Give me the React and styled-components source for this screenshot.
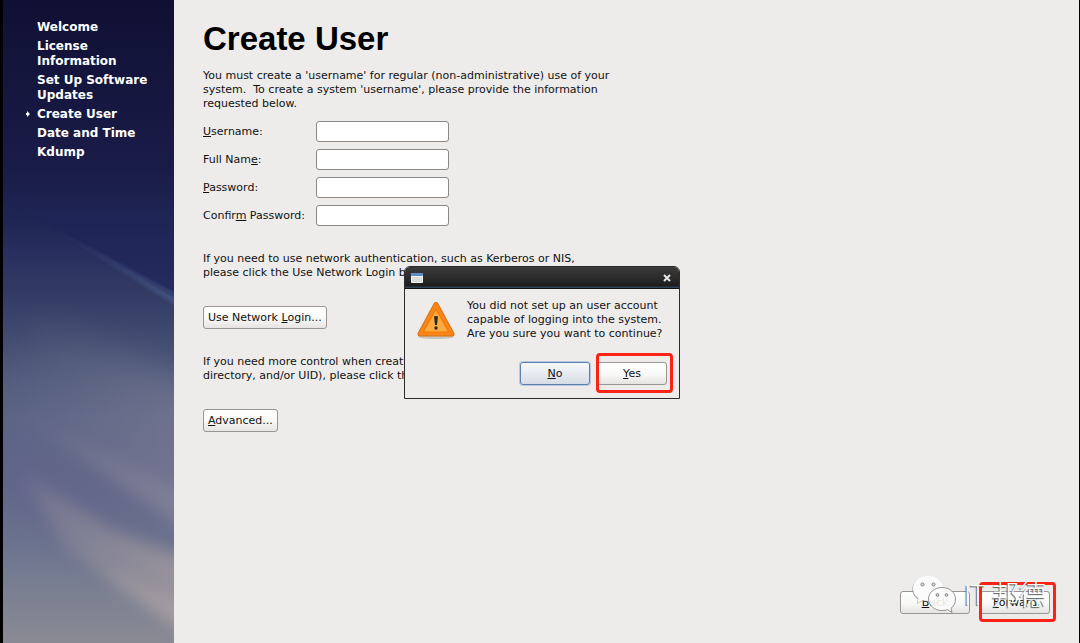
import React from 'react';
import styled, { createGlobalStyle } from 'styled-components';

const GlobalStyle = createGlobalStyle`
  * {
    box-sizing: border-box;
  }

  body {
    margin: 0;
    background-color: #edeceb;
    color: #111111;
    font-family: 'DejaVu Sans', sans-serif;
    font-size: 11px;
    line-height: 14px;
  }
`;

const Screen = styled.div`
  position: relative;
  display: flex;
  min-height: 100vh;
  border-left: 3px solid #000000;
  border-right: 1px solid #000000;
`;

const Sidebar = styled.nav`
  position: relative;
  flex: none;
  width: 171px;
  padding: 20px 20px 20px 34px;
  background-color: #101134;
`;

/* The sky picture lies behind the list of steps */
const SkyArt = styled.svg`
  position: absolute;
  inset: 0;
  width: 100%;
  height: 100%;
`;

const Steps = styled.ol`
  position: relative;
  display: flex;
  flex-direction: column;
  gap: 4px;
  margin: 0;
  padding: 0;
  list-style: none;
`;

const Step = styled.li`
  position: relative;
  color: #ffffff;
  font-size: 12px;
  font-weight: bold;
  line-height: 15px;
  white-space: pre-line;
`;

const StepMark = styled.svg`
  position: absolute;
  top: 4px;
  left: -11px;
  width: 4px;
  height: 6px;
  fill: #ffffff;
`;

const Main = styled.main`
  display: flex;
  flex: 1;
  flex-direction: column;
  align-items: flex-start;
  padding: 21px 29px 29px 29px;
`;

const Title = styled.h1`
  margin: 0 0 12px;
  color: #000000;
  font-family: 'Liberation Sans', Arial, sans-serif;
  font-size: 33px;
  font-weight: bold;
  line-height: 36px;
`;

const Text = styled.p`
  margin: 0;
  white-space: pre-wrap;
`;

const Form = styled.form`
  display: flex;
  flex-direction: column;
  align-items: flex-start;
  gap: 26px;
  margin-top: 10px;
`;

const Fields = styled.div`
  display: grid;
  grid-template-columns: 113px 133px;
  gap: 7px 0;
  align-items: center;
`;

const Input = styled.input`
  width: 100%;
  height: 21px;
  padding: 0 4px;
  border: 1px solid #8c8886;
  border-radius: 3px;
  background-color: #ffffff;
  font: inherit;
`;

const Button = styled.button`
  min-width: ${(props) => (props.$wide ? '70px' : '0')};
  height: 23px;
  padding: 0 4px;
  border: 1px solid ${(props) => (props.$active ? '#5b7fae' : '#989592')};
  border-radius: 3px;
  background: ${(props) =>
    props.$active
      ? 'linear-gradient(#f6f8fb, #e6eaf0 55%, #d6dce5)'
      : 'linear-gradient(#ffffff, #f8f8f7 55%, #e6e4e2)'};
  box-shadow: ${(props) => (props.$active ? '0 0 0 1px #b9c8dc' : 'none')};
  color: #111111;
  font: inherit;
`;

const Footer = styled.footer`
  display: flex;
  align-self: flex-end;
  gap: 10px;
  margin-top: auto;
`;

/* Red frame drawn over a button */
const Marked = styled.div`
  position: relative;
  display: flex;

  &::after {
    content: '';
    position: absolute;
    inset: -9px -6px -8px -1px;
    border: 3px solid #fb2216;
    border-radius: 4px;
    pointer-events: none;
  }
`;

const Dialog = styled.section`
  position: absolute;
  top: 266px;
  left: 401px;
  width: 276px;
  border: 1px solid #2b2b2b;
  border-radius: 6px 6px 0 0;
  background-color: #edeceb;
`;

const TitleBar = styled.header`
  display: flex;
  align-items: center;
  justify-content: space-between;
  height: 22px;
  padding: 1px 6px 0;
  border-bottom: 1px solid #111111;
  border-radius: 5px 5px 0 0;
  background: linear-gradient(#3a3a3a, #2c2c2c 50%, #1c1c1c 90%, #38506f);
`;

const CloseButton = styled.button`
  display: flex;
  padding: 2px;
  border: 0;
  background: none;
`;

const Message = styled.div`
  display: flex;
  align-items: flex-end;
  gap: 12px;
  padding: 10px 11px 0 12px;
`;

const Actions = styled.div`
  display: flex;
  justify-content: flex-end;
  gap: 7px;
  padding: 21px 12px 13px;
`;

const Watermark = styled.div`
  position: absolute;
  right: 33px;
  bottom: 27px;
  display: flex;
  align-items: center;
  gap: 8px;
  color: #ffffff;
  font-family: 'Open Sans', 'Noto Sans CJK SC', sans-serif;
  font-size: 27px;
  font-weight: 300;
  line-height: 42px;
  text-shadow: -1px 1px 1px #555555;
  pointer-events: none;
`;

function Sky() {
  return (
    <SkyArt viewBox="0 0 171 643" preserveAspectRatio="none" aria-hidden="true">
      <defs>
        <linearGradient id="sky" x1="0" y1="0" x2="0" y2="643" gradientUnits="userSpaceOnUse">
          <stop offset="0" stopColor="#101034" />
          <stop offset="0.26" stopColor="#1a1c48" />
          <stop offset="0.34" stopColor="#1f2552" />
          <stop offset="0.39" stopColor="#282e5d" />
          <stop offset="0.47" stopColor="#353e66" />
          <stop offset="0.53" stopColor="#424c71" />
          <stop offset="0.59" stopColor="#505a7b" />
          <stop offset="0.65" stopColor="#5b6384" />
          <stop offset="0.75" stopColor="#646889" />
          <stop offset="0.84" stopColor="#6b728e" />
          <stop offset="0.93" stopColor="#7c8192" />
          <stop offset="1" stopColor="#8a8a93" />
        </linearGradient>
        <linearGradient id="night" x1="0" y1="190" x2="0" y2="300" gradientUnits="userSpaceOnUse">
          <stop offset="0" stopColor="#1e2455" stopOpacity="0" />
          <stop offset="0.35" stopColor="#1f2556" />
          <stop offset="1" stopColor="#262c5e" />
        </linearGradient>
        <linearGradient id="beam" x1="0" y1="0" x2="1" y2="0">
          <stop offset="0" stopColor="#4a5f8c" stopOpacity="0" />
          <stop offset="1" stopColor="#4a5f8c" stopOpacity="0.45" />
        </linearGradient>
        <linearGradient id="glow" x1="0" y1="0" x2="171" y2="0" gradientUnits="userSpaceOnUse">
          <stop offset="0" stopColor="#8d8b9f" stopOpacity="0.1" />
          <stop offset="1" stopColor="#918ea0" stopOpacity="0.85" />
        </linearGradient>
        <linearGradient id="cloud" x1="20" y1="0" x2="171" y2="0" gradientUnits="userSpaceOnUse">
          <stop offset="0" stopColor="#9c959e" stopOpacity="0.3" />
          <stop offset="1" stopColor="#a39b9f" stopOpacity="0.9" />
        </linearGradient>
        <filter id="soft" x="-100%" y="-100%" width="300%" height="300%" colorInterpolationFilters="sRGB">
          <feGaussianBlur stdDeviation="16" />
        </filter>
        <filter id="haze" x="-100%" y="-100%" width="300%" height="300%" colorInterpolationFilters="sRGB">
          <feGaussianBlur stdDeviation="8" />
        </filter>
        <filter id="thin" x="-20%" y="-20%" width="140%" height="140%" colorInterpolationFilters="sRGB">
          <feGaussianBlur stdDeviation="1" />
        </filter>
      </defs>
      <rect width="171" height="643" fill="url(#sky)" />
      <path d="M-10 194 L181 304 V190 H-10 Z" fill="url(#night)" filter="url(#thin)" />
      <path d="M30 216 L180 297 V311 Z" fill="url(#beam)" filter="url(#thin)" />
      <path d="M60 230 L180 304 V308 Z" fill="url(#beam)" filter="url(#thin)" />
      <path d="M40 320 L230 400 V530 L-40 395 Z" fill="url(#glow)" opacity="0.4" filter="url(#soft)" />
      <path d="M20 415 L230 515 V565 Z" fill="url(#glow)" opacity="0.6" filter="url(#haze)" />
      <path d="M-40 430 L130 530 L230 600 L120 560 L-40 490 Z" fill="#5d6089" opacity="0.3" filter="url(#soft)" />
      <path d="M20 475 L110 530 L230 575 V665 L110 585 L60 545 Z" fill="url(#cloud)" opacity="0.85" filter="url(#haze)" />
      <path d="M100 570 L220 625 V655 Z" fill="#b3aaac" opacity="0.5" filter="url(#haze)" />
    </SkyArt>
  );
}

function WarningIcon() {
  return (
    <svg width="38" height="40" viewBox="0 0 38 40" aria-hidden="true">
      <ellipse cx="19" cy="36" rx="18" ry="2" fill="#c9c6c2" />
      <path
        d="M19 3.5 L35 33 H3 Z"
        fill="#f57900"
        stroke="#d9700f"
        strokeWidth="5"
        strokeLinejoin="round"
      />
      <path
        d="M19 3.5 L35 33 H3 Z"
        fill="#f57900"
        stroke="#f8861a"
        strokeWidth="3"
        strokeLinejoin="round"
      />
      <path d="M19 10 L30 30 H8 Z" fill="#fbab40" stroke="#fbab40" strokeLinejoin="round" />
      <path d="M17 15.5 Q19 14.5 21 15.5 L20 24 H18 Z" fill="#2e2a1c" />
      <circle cx="19" cy="27" r="1.7" fill="#2e2a1c" />
    </svg>
  );
}

function WindowIcon() {
  return (
    <svg width="12" height="10" viewBox="0 0 12 10" aria-hidden="true">
      <rect width="12" height="10" rx="1" fill="#f1f1ee" />
      <rect width="12" height="3" rx="1" fill="#5b8cc9" />
      <rect x="1" y="4" width="10" height="5" fill="#dcdcd8" />
    </svg>
  );
}

function ChatLogo() {
  return (
    <svg width="44" height="40" viewBox="0 0 44 40" aria-hidden="true">
      <path
        d="M16 1 C7.5 1 1 6.5 1 13.5 C1 17.5 3 21 6.5 23.3 L5.5 28 L10.5 25.3 C12.3 25.8 14 26 16 26 C24.5 26 31 20.5 31 13.5 C31 6.5 24.5 1 16 1 Z"
        fill="#777777"
        opacity="0.6"
        transform="translate(-0.7 1)"
      />
      <path
        d="M16 1 C7.5 1 1 6.5 1 13.5 C1 17.5 3 21 6.5 23.3 L5.5 28 L10.5 25.3 C12.3 25.8 14 26 16 26 C24.5 26 31 20.5 31 13.5 C31 6.5 24.5 1 16 1 Z"
        fill="#fbfbfb"
      />
      <path
        d="M30 12.5 C22.5 12.5 16.5 17.5 16.5 24 C16.5 30.5 22.5 35.5 30 35.5 C32 35.5 34 35.2 35.5 34.7 L40 37.5 L39 33.3 C42 31 43.5 27.8 43.5 24 C43.5 17.5 37.5 12.5 30 12.5 Z"
        fill="#fbfbfb"
        fillOpacity="0.9"
        stroke="#888888"
        strokeWidth="0.9"
      />
      <g fill="#d5d5d5" stroke="#777777" strokeWidth="0.8">
        <circle cx="10.5" cy="9.5" r="1.6" />
        <circle cx="21.5" cy="9.5" r="1.6" />
        <circle cx="25.5" cy="20" r="1.4" />
        <circle cx="34.5" cy="20" r="1.4" />
      </g>
    </svg>
  );
}

const steps = [
  'Welcome',
  'License\nInformation',
  'Set Up Software\nUpdates',
  'Create User',
  'Date and Time',
  'Kdump',
];

function App() {
  return (
    <>
      <GlobalStyle />
      <Screen>
        <Sidebar>
          <Sky />
          <Steps>
            {steps.map((step) => (
              <Step key={step}>
                {step === 'Create User' && (
                  <StepMark viewBox="0 0 4 6">
                    <path d="M1 0 L4 3 L1 6 Z M0 2 H2 V4 H0 Z" />
                  </StepMark>
                )}
                {step}
              </Step>
            ))}
          </Steps>
        </Sidebar>

        <Main>
          <Title>Create User</Title>
          <Text>
            {"You must create a 'username' for regular (non-administrative) use of your\nsystem.  To create a system 'username', please provide the information\nrequested below."}
          </Text>
          <Form onSubmit={(e) => e.preventDefault()}>
            <Fields>
              <label htmlFor="username"><u>U</u>sername:</label>
              <Input id="username" type="text" />
              <label htmlFor="fullname">Full Nam<u>e</u>:</label>
              <Input id="fullname" type="text" />
              <label htmlFor="password"><u>P</u>assword:</label>
              <Input id="password" type="password" />
              <label htmlFor="confirm">Confir<u>m</u> Password:</label>
              <Input id="confirm" type="password" />
            </Fields>
            <Text>
              {'If you need to use network authentication, such as Kerberos or NIS,\nplease click the Use Network Login button.'}
            </Text>
            <Button type="button">Use Network <u>L</u>ogin...</Button>
            <Text>
              {'If you need more control when creating the user (home\ndirectory, and/or UID), please click the Advanced button.'}
            </Text>
            <Button type="button"><u>A</u>dvanced...</Button>
          </Form>
          <Footer>
            <Button type="button" $wide><u>B</u>ack</Button>
            <Marked>
              <Button type="button" $wide><u>F</u>orward</Button>
            </Marked>
          </Footer>
        </Main>

        <Dialog role="alertdialog" aria-labelledby="question">
          <TitleBar>
            <WindowIcon />
            <CloseButton type="button" aria-label="Close">
              <svg width="8" height="8" viewBox="0 0 8 8">
                <path d="M1 1 L7 7 M7 1 L1 7" stroke="#e6e6e6" strokeWidth="2" />
              </svg>
            </CloseButton>
          </TitleBar>
          <Message>
            <WarningIcon />
            <Text id="question">
              {'You did not set up an user account\ncapable of logging into the system.\nAre you sure you want to continue?'}
            </Text>
          </Message>
          <Actions>
            <Button type="button" $wide $active><u>N</u>o</Button>
            <Marked>
              <Button type="button" $wide><u>Y</u>es</Button>
            </Marked>
          </Actions>
        </Dialog>

        <Watermark>
          <ChatLogo />
          <span>IT 邦德</span>
        </Watermark>
      </Screen>
    </>
  );
}

export default App;
